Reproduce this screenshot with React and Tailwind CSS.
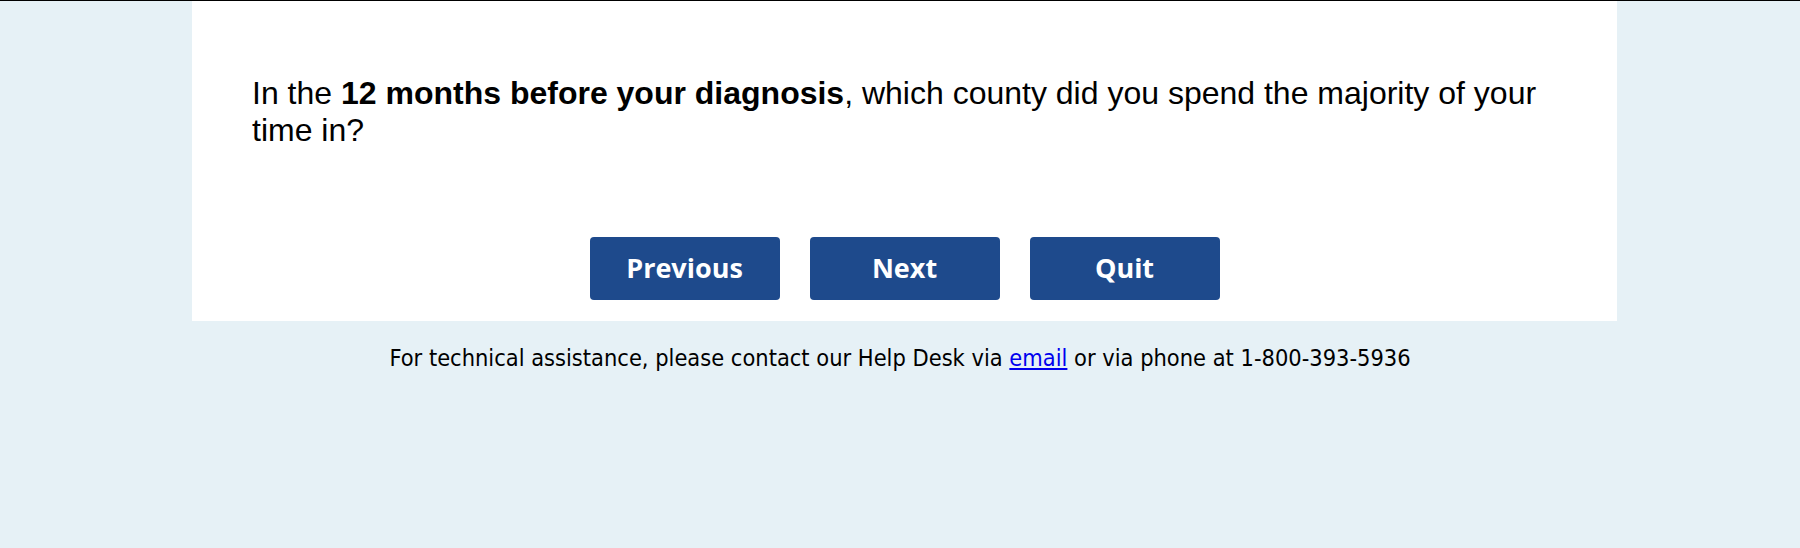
export default function App() {
  const buttons = ['Previous', 'Next', 'Quit'];

  return (
    <div className="min-h-screen border-t border-black bg-[#e6f1f6]">
      <div className="ml-[192px] w-[1425px] bg-white px-[60px] pt-[74px] pb-[21px]">
        <p className="font-['Liberation_Sans',Arial,sans-serif] text-[32px] leading-[37px] text-black">
          In the <b>12 months before your diagnosis</b>, which county did you spend the majority of your time in?
        </p>
        <div className="mt-[88px] flex justify-center gap-[30px]">
          {buttons.map((label) => (
            <button
              key={label}
              className="h-[63px] w-[190px] rounded-[4px] bg-[#1e4a8c] font-['Open_Sans',sans-serif] text-[27px] font-bold text-white"
            >
              {label}
            </button>
          ))}
        </div>
      </div>
      <p className="mt-[24px] text-center font-['DejaVu_Sans_Condensed','DejaVu_Sans',sans-serif] text-[23.4px] leading-[27px] text-black">
        For technical assistance, please contact our Help Desk via{' '}
        <a href="#" className="text-[#0000ee] underline">email</a> or via phone at 1-800-393-5936
      </p>
    </div>
  );
}
